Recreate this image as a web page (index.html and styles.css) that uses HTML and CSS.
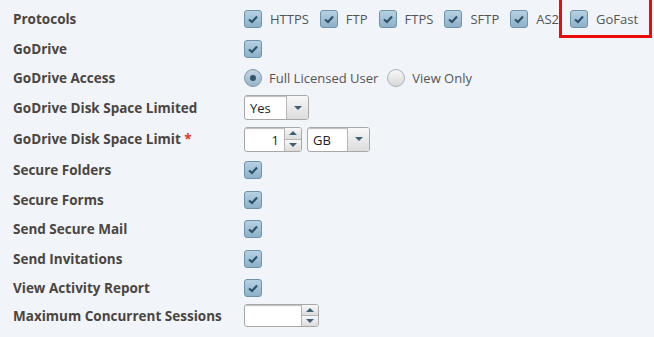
FILE: index.html
```html
<!DOCTYPE html>
<html lang="en">

<head>
    <meta charset="UTF-8">
    <title>User Permissions</title>
    <link rel="stylesheet" href="styles.css">
</head>

<body>
    <!-- Permission settings -->
    <div class="settings">
        <div class="row">
            <div class="label">Protocols</div>
            <div class="field">
                <span class="opt"><span class="check on"><svg viewBox="0 0 16 16"><polyline points="4,8.5 7,11 12,5.5"/></svg></span>HTTPS</span>
                <span class="opt"><span class="check on"><svg viewBox="0 0 16 16"><polyline points="4,8.5 7,11 12,5.5"/></svg></span>FTP</span>
                <span class="opt"><span class="check on"><svg viewBox="0 0 16 16"><polyline points="4,8.5 7,11 12,5.5"/></svg></span>FTPS</span>
                <span class="opt"><span class="check on"><svg viewBox="0 0 16 16"><polyline points="4,8.5 7,11 12,5.5"/></svg></span>SFTP</span>
                <span class="opt"><span class="check on"><svg viewBox="0 0 16 16"><polyline points="4,8.5 7,11 12,5.5"/></svg></span>AS2</span>
                <span class="opt highlight"><span class="check on"><svg viewBox="0 0 16 16"><polyline points="4,8.5 7,11 12,5.5"/></svg></span>GoFast</span>
            </div>
        </div>
        <div class="row row-sm">
            <div class="label">GoDrive</div>
            <div class="field"><span class="check on"><svg viewBox="0 0 16 16"><polyline points="4,8.5 7,11 12,5.5"/></svg></span></div>
        </div>
        <div class="row row-sm">
            <div class="label">GoDrive Access</div>
            <div class="field">
                <span class="opt opt-radio"><span class="radio on"></span>Full Licensed User</span>
                <span class="opt opt-radio"><span class="radio"></span>View Only</span>
            </div>
        </div>
        <div class="row row-field">
            <div class="label">GoDrive Disk Space Limited</div>
            <div class="field">
                <div class="select select-yes"><span class="select-text">Yes</span><span class="select-btn"></span></div>
            </div>
        </div>
        <div class="row row-field">
            <div class="label">GoDrive Disk Space Limit <span class="req">*</span></div>
            <div class="field">
                <div class="spinner"><span class="spin-text">1</span><span class="spin-btns"><span class="up"></span><span class="down"></span></span></div>
                <div class="select select-unit"><span class="select-text">GB</span><span class="select-btn"></span></div>
            </div>
        </div>
        <div class="row">
            <div class="label">Secure Folders</div>
            <div class="field"><span class="check on"><svg viewBox="0 0 16 16"><polyline points="4,8.5 7,11 12,5.5"/></svg></span></div>
        </div>
        <div class="row row-sm">
            <div class="label">Secure Forms</div>
            <div class="field"><span class="check on"><svg viewBox="0 0 16 16"><polyline points="4,8.5 7,11 12,5.5"/></svg></span></div>
        </div>
        <div class="row">
            <div class="label">Send Secure Mail</div>
            <div class="field"><span class="check on"><svg viewBox="0 0 16 16"><polyline points="4,8.5 7,11 12,5.5"/></svg></span></div>
        </div>
        <div class="row">
            <div class="label">Send Invitations</div>
            <div class="field"><span class="check on"><svg viewBox="0 0 16 16"><polyline points="4,8.5 7,11 12,5.5"/></svg></span></div>
        </div>
        <div class="row row-xs">
            <div class="label">View Activity Report</div>
            <div class="field"><span class="check on"><svg viewBox="0 0 16 16"><polyline points="4,8.5 7,11 12,5.5"/></svg></span></div>
        </div>
        <div class="row row-last">
            <div class="label">Maximum Concurrent Sessions</div>
            <div class="field">
                <div class="spinner spinner-wide"><span class="spin-text"></span><span class="spin-btns"><span class="up"></span><span class="down"></span></span></div>
            </div>
        </div>
    </div>
</body>

</html>
```

FILE: styles.css
```css
* {
    margin: 0;
    padding: 0;
    box-sizing: border-box;
}

body {
    font-family: 'Open Sans', 'Liberation Sans', sans-serif;
    font-size: 13px;
    background-color: #f1f4f9;
    color: #555;
}

.settings {
    display: flex;
    flex-direction: column;
    padding: 4px 0 0 13px;
}

.row {
    display: flex;
    align-items: center;
    height: 30px;
}

.row-sm {
    height: 29px;
}

.row-xs {
    height: 28px;
}

.row-field {
    height: 31.5px;
}

.row-last {
    height: 27px;
}

.label {
    width: 231px;
    font-size: 13.5px;
    font-weight: 700;
    color: #4a4540;
}

.req {
    color: #e8322f;
}

.field {
    display: flex;
    align-items: center;
    gap: 5px;
}

.opt {
    display: inline-flex;
    align-items: center;
    gap: 8px;
    margin-right: 6px;
    color: #555;
    position: relative;
}

.opt-radio {
    gap: 7px;
    margin-right: 4px;
}

/* red box drawn over the GoFast option */
.highlight::after {
    content: '';
    position: absolute;
    top: -18px;
    bottom: -10px;
    left: -11px;
    right: -14px;
    border: 3px solid #ec0b0b;
}

.check {
    display: inline-block;
    width: 18px;
    height: 18px;
    border: 1px solid #6f93aa;
    border-radius: 3px;
    background: linear-gradient(#b6d1e3, #8db1c9);
}

.check svg {
    display: block;
    width: 16px;
    height: 16px;
    fill: none;
    stroke: #2f5168;
    stroke-width: 2.2;
}

.radio {
    display: inline-block;
    width: 18px;
    height: 18px;
    border: 1px solid #a9b3ba;
    border-radius: 50%;
    background: linear-gradient(#f7f7f7, #d8d8d8);
    position: relative;
}

.radio.on {
    border-color: #7c98ab;
    background: linear-gradient(#c4d6e3, #97b4c8);
}

.radio.on::after {
    content: '';
    position: absolute;
    top: 5px;
    left: 5px;
    width: 6px;
    height: 6px;
    border-radius: 50%;
    background-color: #33546b;
}

.select,
.spinner {
    display: flex;
    height: 25px;
    border: 1px solid #a8a8a8;
    border-radius: 3px;
    background-color: #fff;
    color: #222;
    overflow: hidden;
}

.select-yes {
    width: 65px;
}

.select-unit {
    width: 63px;
}

.select-text {
    flex: 1;
    padding: 3px 0 0 5px;
    box-shadow: inset 0 2px 1px -1px #bdbdbd;
}

.select-btn {
    width: 22px;
    border-left: 1px solid #b5b5b5;
    background: linear-gradient(#f8f8f8, #dcdcdc);
    position: relative;
}

.select-btn::after,
.up::after,
.down::after {
    content: '';
    position: absolute;
    left: 50%;
    top: 50%;
    margin-left: -4px;
    margin-top: -2px;
    border-left: 4px solid transparent;
    border-right: 4px solid transparent;
    border-top: 4px solid #3e6076;
}

.spinner {
    width: 58px;
}

.spinner-wide {
    width: 75px;
    height: 23px;
}

.spin-text {
    flex: 1;
    text-align: right;
    padding: 3px 5px 0 0;
    box-shadow: inset 0 2px 1px -1px #bdbdbd;
}

.spin-btns {
    width: 17px;
    display: flex;
    flex-direction: column;
    border-left: 1px solid #b5b5b5;
}

.up,
.down {
    flex: 1;
    position: relative;
    background: linear-gradient(#f8f8f8, #dcdcdc);
}

.up {
    border-bottom: 1px solid #b5b5b5;
}

.up::after {
    border-top: none;
    border-bottom: 4px solid #3e6076;
}
```
